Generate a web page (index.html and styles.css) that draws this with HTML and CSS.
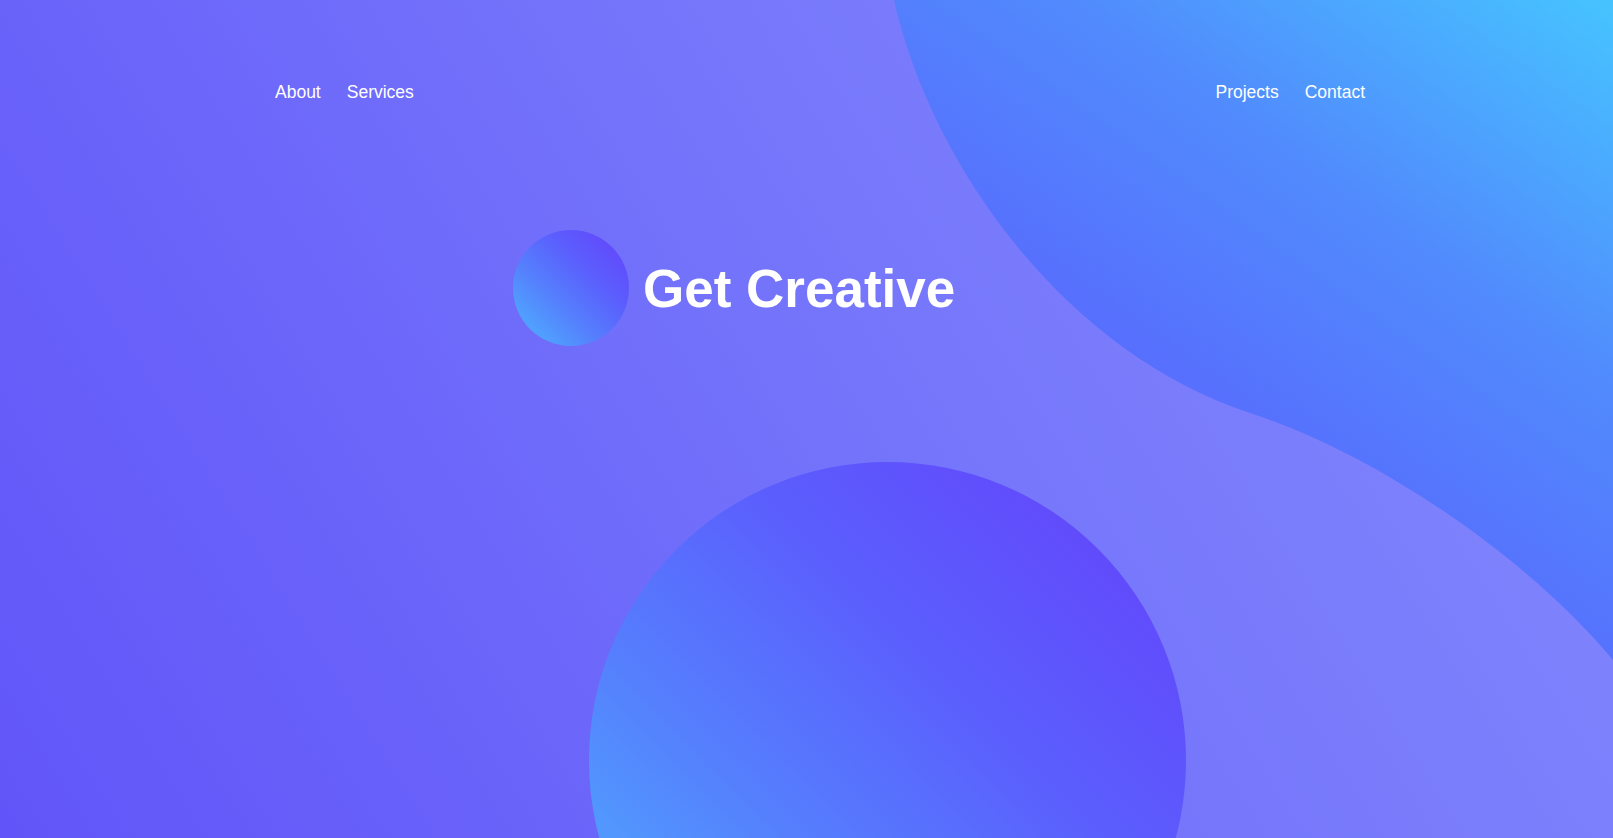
FILE: index.html
```html
<!DOCTYPE html>
<html lang="en">
<head>
<meta charset="utf-8">
<title>Get Creative</title>
<link rel="stylesheet" href="styles.css">
</head>
<body>
<div class="decor">
  <svg class="blob" viewBox="0 0 1613 838" width="1613" height="838" aria-hidden="true">
    <defs>
      <linearGradient id="blobGrad" x1="1" y1="0" x2="0.3" y2="0.9">
        <stop offset="0" stop-color="#46c4ff"/>
        <stop offset="0.4" stop-color="#518bfd"/>
        <stop offset="0.8" stop-color="#5869fd"/>
        <stop offset="1" stop-color="#5a63fd"/>
      </linearGradient>
    </defs>
    <path d="M894,0 C930,160 1060,350 1250,413 C1380,455 1530,560 1613,660 L1613,0 Z" fill="url(#blobGrad)"/>
  </svg>
  <div class="big-circle"></div>
</div>
<header class="nav">
  <nav class="nav-group">
    <a class="nav-link" href="#">About</a>
    <a class="nav-link" href="#">Services</a>
  </nav>
  <nav class="nav-group">
    <a class="nav-link" href="#">Projects</a>
    <a class="nav-link" href="#">Contact</a>
  </nav>
</header>
<main class="hero">
  <div class="logo-circle"></div>
  <h1 class="hero-title">Get Creative</h1>
</main>
</body>
</html>
```

FILE: styles.css
```css
html, body {
  margin: 0;
  padding: 0;
  height: 100%;
  overflow: hidden;
}

body {
  position: relative;
  font-family: "Liberation Sans", Arial, sans-serif;
  color: #ffffff;
  background: linear-gradient(58deg, #6155f9 0%, #6a63fa 25%, #7474fb 52%, #7d81fc 78%, #8189fd 100%);
}

.decor {
  position: absolute;
  inset: 0;
  z-index: 0;
  overflow: hidden;
  pointer-events: none;
}

.blob {
  position: absolute;
  top: 0;
  left: 0;
  display: block;
}

.big-circle {
  position: absolute;
  left: 589px;
  top: 462px;
  width: 597px;
  height: 597px;
  border-radius: 50%;
  background: linear-gradient(to top right, #4cb8ff 0%, #5580fd 35%, #5b5efd 62%, #6540fb 100%);
}

.nav {
  position: relative;
  z-index: 1;
  display: flex;
  justify-content: space-between;
  padding: 82px 248px 0 275px;
}

.nav-group {
  display: flex;
  gap: 26px;
}

.nav-link {
  color: #ffffff;
  text-decoration: none;
  font-size: 17.5px;
  line-height: 20px;
}

.hero {
  position: relative;
  z-index: 1;
  display: flex;
  align-items: center;
  gap: 14px;
  margin-top: 128px;
  padding-left: 513px;
}

.logo-circle {
  flex: none;
  width: 116px;
  height: 116px;
  border-radius: 50%;
  background: linear-gradient(to top right, #4cb8ff 0%, #5580fd 38%, #5b5efd 65%, #6540fb 100%);
}

.hero-title {
  margin: 0;
  font-size: 53px;
  font-weight: 700;
  line-height: normal;
  color: #ffffff;
}
```
